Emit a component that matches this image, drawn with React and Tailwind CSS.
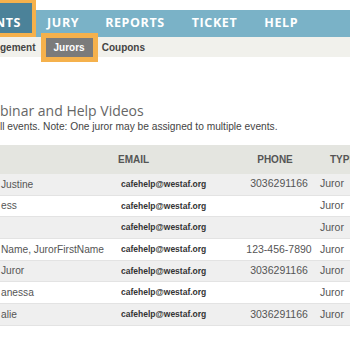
import React from 'react';

const jurors = [
  { name: 'Justine', email: 'cafehelp@westaf.org', phone: '3036291166', type: 'Juror' },
  { name: 'ess', email: 'cafehelp@westaf.org', phone: '', type: 'Juror' },
  { name: '', email: 'cafehelp@westaf.org', phone: '', type: 'Juror' },
  { name: 'Name, JurorFirstName', email: 'cafehelp@westaf.org', phone: '123-456-7890', type: 'Juror' },
  { name: 'Juror', email: 'cafehelp@westaf.org', phone: '3036291166', type: 'Juror' },
  { name: 'anessa', email: 'cafehelp@westaf.org', phone: '', type: 'Juror' },
  { name: 'alie', email: 'cafehelp@westaf.org', phone: '3036291166', type: 'Juror' },
];

const App = () => {
  return (
    <div className="w-[350px] h-[350px] overflow-hidden bg-white pt-[10px] font-['Liberation_Sans',Arial,sans-serif]">
      {/* main nav */}
      <div className="h-[27px] bg-[#7ab2c7] flex items-center text-white font-bold text-[12.5px] tracking-[0.6px] font-['Open_Sans',sans-serif] whitespace-nowrap">
        <div className="relative h-full flex items-center pr-[11px]">
          <span className="absolute left-0 right-0 top-[-7px] bottom-[4px] bg-[#4b8299] outline-[4px] outline-solid outline-[#f5b14c]"></span>
          <span className="relative -ml-[5px]">NTS</span>
        </div>
        <div className="pl-[15px] pr-[13px]">JURY</div>
        <div className="px-[13px]">REPORTS</div>
        <div className="pl-[14px] pr-[13px]">TICKET</div>
        <div className="pl-[14px] pr-[13px]">HELP</div>
      </div>

      {/* sub nav */}
      <div className="h-[20px] bg-[#f1f1ec] flex items-center text-[10px] font-bold text-[#444] whitespace-nowrap">
        <span>gement</span>
        <span className="ml-[10px] h-[19px] mt-[1px] px-[8px] flex items-center bg-[#7b7b7b] text-white outline-[5px] outline-solid outline-[#f5b14c]">Jurors</span>
        <span className="ml-[9px]">Coupons</span>
      </div>

      {/* heading */}
      <h1 className="mt-[45px] text-[14px] leading-[18px] text-[#666] font-['Open_Sans',sans-serif] whitespace-nowrap">binar and Help Videos</h1>
      <p className="mt-[1px] text-[10.2px] leading-[12px] text-[#444] whitespace-nowrap">ll events. Note: One juror may be assigned to multiple events.</p>

      {/* table */}
      <div className="mt-[12px] w-[400px]">
        <div className="h-[29px] bg-[#e4e5e0] flex items-center text-[10px] font-bold text-[#555]">
          <div className="w-[118px]"></div>
          <div className="w-[120px]">EMAIL</div>
          <div className="w-[82px] text-center pr-[8px]">PHONE</div>
          <div className="pl-[10px]">TYPE</div>
        </div>
        {jurors.map((j, i) => (
          <div
            key={i}
            className={`h-[21.7px] flex items-center border-b border-[#e3e3e3] text-[10.2px] text-[#555] whitespace-nowrap ${
              i % 2 === 0 ? 'bg-[#efefef]' : 'bg-white'
            }`}
          >
            <div className="w-[118px] pl-[1px]">{j.name}</div>
            <div className="w-[120px] pl-[3px] text-[8.5px] font-bold text-[#333]">{j.email}</div>
            <div className="w-[82px] text-center text-[10.5px]">{j.phone}</div>
            <div className="text-[10.5px]">{j.type}</div>
          </div>
        ))}
      </div>
    </div>
  );
};

export default App;
